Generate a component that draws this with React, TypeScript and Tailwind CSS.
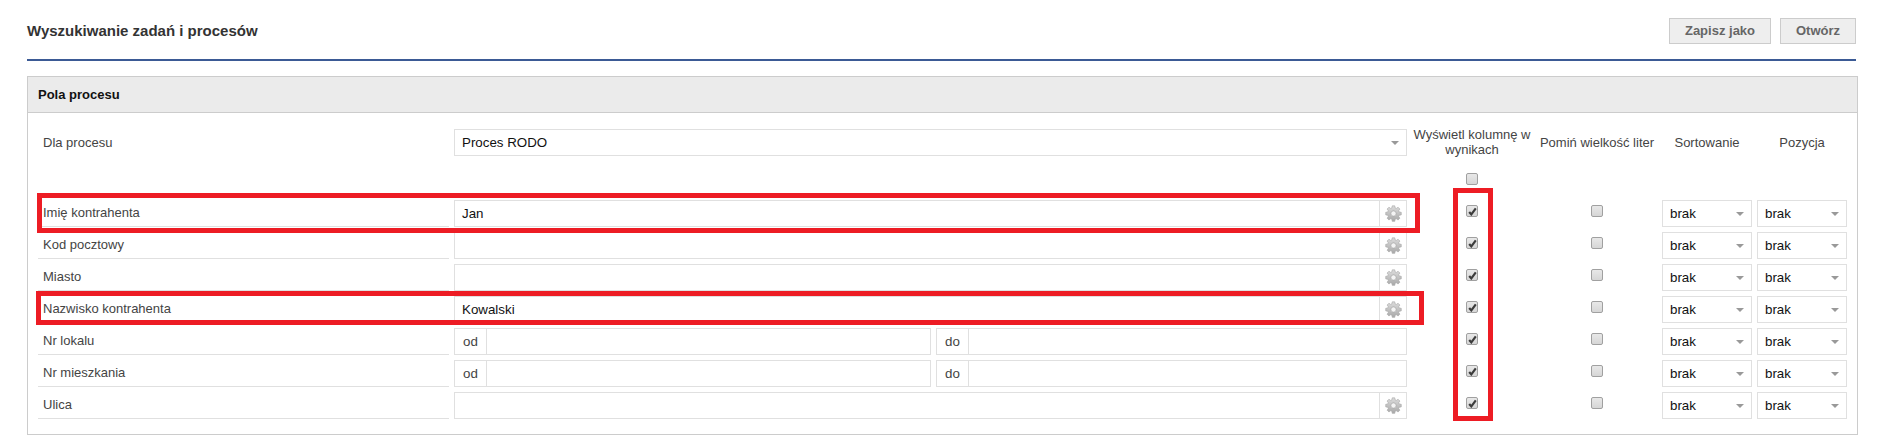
import React from 'react';

const rowGrid = "grid grid-cols-[411px_958px_130px_120px_95px_95px] items-start";

const Arrow = () => (
    <span className="w-0 h-0 border-x-[4px] border-x-transparent border-t-[4px] border-t-[#999]" />
);

const Gear = () => (
    <svg width="17" height="17" viewBox="0 0 16 16" aria-hidden="true">
        <defs>
            <linearGradient id="gearFill" x1="0" y1="0" x2="0" y2="1">
                <stop offset="0" stopColor="#dcdcdc" />
                <stop offset="1" stopColor="#a8a8a8" />
            </linearGradient>
        </defs>
        <path
            fill="url(#gearFill)"
            stroke="#a8a8a8"
            strokeWidth="0.6"
            fillRule="evenodd"
            d="M6.8 0.8h2.4l.3 1.9 1.2.5 1.6-1.1 1.7 1.7-1.1 1.6.5 1.2 1.9.3v2.4l-1.9.3-.5 1.2 1.1 1.6-1.7 1.7-1.6-1.1-1.2.5-.3 1.9H6.8l-.3-1.9-1.2-.5-1.6 1.1-1.7-1.7 1.1-1.6-.5-1.2-1.9-.3V6.9l1.9-.3.5-1.2-1.1-1.6 1.7-1.7 1.6 1.1 1.2-.5zM8 5.6a2.4 2.4 0 1 0 0 4.8 2.4 2.4 0 0 0 0-4.8z"
        />
        <circle cx="8" cy="8" r="2.4" fill="#f4f4f4" stroke="#b0b0b0" strokeWidth="0.6" />
    </svg>
);

const Check = ({ checked }: { checked?: boolean }) => (
    <span className="flex items-center justify-center w-[12px] h-[12px] rounded-[2px] border border-[#a0a0a0] bg-gradient-to-b from-[#e8e8e8] to-[#d6d6d6]">
        {checked && (
            <svg width="9" height="9" viewBox="0 0 9 9" aria-hidden="true">
                <path d="M1.2 5 L3.3 7.4 L7.8 1.4" fill="none" stroke="#3c3c3c" strokeWidth="2.2" />
            </svg>
        )}
    </span>
);

const Select = ({ value }: { value: string }) => (
    <div className="flex items-center justify-between h-[27px] ml-[5px] border border-[#e0e0e0] bg-white pl-[7px] pr-[7px] text-[13.33px] text-[#111]">
        <span>{value}</span>
        <Arrow />
    </div>
);

const TextField = ({ value }: { value?: string }) => (
    <div className="flex h-[27px] border border-[#e0e0e0] bg-white">
        <div className="flex-1 pl-[7px] text-[13.33px] leading-[25px] text-[#111]">{value}</div>
        <div className="flex items-center justify-center w-[27px] border-l border-[#e0e0e0]">
            <Gear />
        </div>
    </div>
);

const RangeField = () => (
    <div className="flex gap-[5px]">
        <div className="flex w-[477px] h-[27px] border border-[#e0e0e0] bg-white">
            <span className="w-[32px] border-r border-[#e0e0e0] text-center text-[13.33px] leading-[25px] text-[#444]">od</span>
        </div>
        <div className="flex flex-1 h-[27px] border border-[#e0e0e0] bg-white">
            <span className="w-[32px] border-r border-[#e0e0e0] text-center text-[13.33px] leading-[25px] text-[#444]">do</span>
        </div>
    </div>
);

const fields = [
    { label: 'Imię kontrahenta', value: 'Jan' },
    { label: 'Kod pocztowy' },
    { label: 'Miasto' },
    { label: 'Nazwisko kontrahenta', value: 'Kowalski' },
    { label: 'Nr lokalu', range: true },
    { label: 'Nr mieszkania', range: true },
    { label: 'Ulica' },
];

export default function App() {
    return (
        <div className="relative h-[444px] overflow-hidden bg-white px-[27px] text-[13px] font-['Liberation_Sans',Arial,sans-serif]">
            <div className="flex items-start justify-between w-[1829px] h-[61px] pt-[18px] border-b-[2px] border-[#3b5a95]">
                <h1 className="text-[15px] font-bold leading-[26px] text-[#333]">Wyszukiwanie zadań i procesów</h1>
                <div className="flex gap-[9px]">
                    <button className="w-[102px] h-[26px] border border-[#ccc] bg-[#eee] text-[13px] font-bold text-[#666]">Zapisz jako</button>
                    <button className="w-[76px] h-[26px] border border-[#ccc] bg-[#eee] text-[13px] font-bold text-[#666]">Otwórz</button>
                </div>
            </div>

            <div className="mt-[15px] w-[1831px] h-[359px] border border-[#ccc]">
                <div className="h-[36px] border-b border-[#ccc] bg-[#ebebeb] pl-[10px] text-[13px] font-bold leading-[36px] text-[#111]">Pola procesu</div>
                <div className="pl-[10px] pt-[16px]">
                    <div className={`${rowGrid} h-[44px]`}>
                        <div className="pl-[5px] leading-[28px] text-[#444]">Dla procesu</div>
                        <div className="ml-[5px]">
                            <div className="flex items-center justify-between h-[27px] border border-[#e0e0e0] bg-white pl-[7px] pr-[7px] text-[13.33px] text-[#111]">
                                <span>Proces RODO</span>
                                <Arrow />
                            </div>
                        </div>
                        <div className="text-center leading-[15px] text-[#444] -mt-[2px] px-[3px]">Wyświetl kolumnę w wynikach</div>
                        <div className="whitespace-nowrap text-center leading-[28px] text-[#444]">Pomiń wielkość liter</div>
                        <div className="text-center leading-[28px] text-[#444] ml-[5px]">Sortowanie</div>
                        <div className="text-center leading-[28px] text-[#444] ml-[5px]">Pozycja</div>
                    </div>
                    <div className={`${rowGrid} h-[27px]`}>
                        <div />
                        <div />
                        <div className="flex justify-center"><Check /></div>
                    </div>
                    {fields.map((field) => (
                        <div key={field.label} className={`${rowGrid} h-[32px]`}>
                            <div className="h-[27px] border-b border-[#e0e0e0] pl-[5px] leading-[25px] text-[#444]">{field.label}</div>
                            <div className="ml-[5px]">
                                {field.range ? <RangeField /> : <TextField value={field.value} />}
                            </div>
                            <div className="flex justify-center pt-[5px]"><Check checked /></div>
                            <div className="flex justify-center pt-[5px]"><Check /></div>
                            <Select value="brak" />
                            <Select value="brak" />
                        </div>
                    ))}
                </div>
            </div>

            {/* czerwone ramki z adnotacji */}
            <div className="absolute left-[37px] top-[193px] w-[1383px] h-[40px] border-[5px] border-[#ed1c24]" />
            <div className="absolute left-[36px] top-[291px] w-[1388px] h-[34px] border-[5px] border-[#ed1c24]" />
            <div className="absolute left-[1453px] top-[188px] w-[40px] h-[233px] border-[5px] border-[#ed1c24]" />
        </div>
    );
}
